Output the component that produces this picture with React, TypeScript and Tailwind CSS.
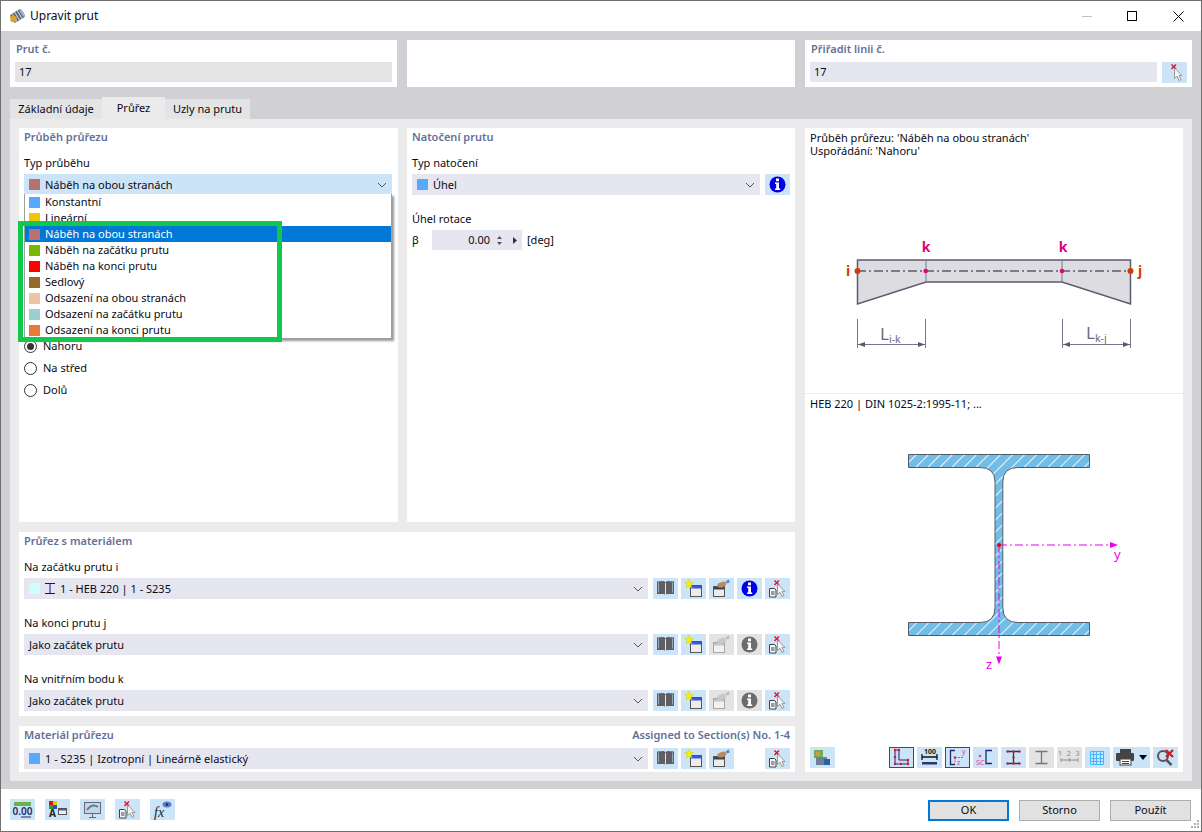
const Swatch = ({ c }: { c: string }) => <span className="w-[11px] h-[11px] shrink-0" style={{ background: c }} />;

const T = ({ children }: { children: React.ReactNode }) => <span className="pt-[2px]">{children}</span>;

const Chevron = () => (
  <svg width="10" height="6" viewBox="0 0 10 6" className="shrink-0">
    <path d="M1 1l4 4 4-4" fill="none" stroke="#555" strokeWidth="1" />
  </svg>
);

function Combo({ children, w, active }: { children: React.ReactNode; w: string; active?: boolean }) {
  return (
    <div className={`${w} ${active ? "bg-[#cce4f7]" : "bg-[#e6e6f1]"} h-[21px] flex items-center gap-[5px] pl-[5px] pr-[5px] shrink-0`}>
      {children}
      <span className="ml-auto"><Chevron /></span>
    </div>
  );
}

function Btn({ children, off, on }: { children: React.ReactNode; off?: boolean; on?: boolean }) {
  return (
    <div className={`w-[25px] h-[21px] shrink-0 flex items-center justify-center ${off ? "bg-[#e3e3e3]" : "bg-[#cce4f7]"} ${on ? "border border-[#0a5a9c]" : ""}`}>
      {children}
    </div>
  );
}

const Ico = ({ children }: { children: React.ReactNode }) => (
  <svg width="25" height="21" viewBox="0 0 25 21" className="shrink-0">{children}</svg>
);

const BookIcon = () => (
  <Ico>
    <path d="M4 3.500l7-.5 1.500 1.500L14 3l7 .5V16h-7l-1.500 1L11 16H4z" fill="#5e5e64" />
    <path d="M5.500 4.500v10M19.500 4.500v10" stroke="#93a6b8" strokeWidth="1" />
    <path d="M12.500 5v12" stroke="#dbe8f2" strokeWidth="1" />
  </Ico>
);

const NewIcon = () => (
  <Ico>
    <rect x="9.500" y="7.500" width="11" height="11" fill="#ececec" stroke="#555" />
    <rect x="10" y="8" width="10" height="2.500" fill="#3c56d8" />
    <path d="M8 1l1.300 3.200 3.200 .3-2.500 2.100 .9 3.400L8 8.200 5.100 10l.9-3.400L3.500 4.500l3.200-.3z" fill="#f5f000" stroke="#c8c800" strokeWidth=".4" />
  </Ico>
);

const EditIcon = ({ off }: { off?: boolean }) => (
  <Ico>
    <rect x="4.500" y="8.500" width="11" height="10" fill={off ? "#f2f2f2" : "#ececec"} stroke={off ? "#a8a8a8" : "#555"} />
    <rect x="5" y="9" width="10" height="2.500" fill={off ? "#c4c4c4" : "#444"} />
    <path d="M8 8l1-2.500 5-2 3.500 .5-.5 3-3.500 2.500H10z" fill={off ? "#c9c9c9" : "#b98a66"} />
    <path d="M17 3l3-1.500 .5 3-2.500 1z" fill={off ? "#bcbcbc" : "#4f87c9"} />
  </Ico>
);

const InfoIcon = ({ off }: { off?: boolean }) => (
  <Ico>
    <circle cx="12.500" cy="10.500" r="8" fill={off ? "#6c6c6c" : "#0000e8"} />
    <rect x="11" y="4.500" width="3" height="2.800" fill="#fff" />
    <path d="M10 8.500h4v6h1.200v1.500H10v-1.500h1.200V10H10z" fill="#fff" />
  </Ico>
);

const PickIcon = ({ doc = true }: { doc?: boolean }) => (
  <Ico>
    {doc && (
      <>
        <path d="M4.500 10.500h5l1.500 1.500v7H4.500z" fill="#f3f3f3" stroke="#444" />
        <path d="M6 14h3.500M6 16h3.500" stroke="#444" />
      </>
    )}
    <path d="M9.500 2.500l4.500 4.500M14 2.500L9.500 7" stroke="#e8102a" strokeWidth="1.500" />
    <path d="M12.500 6l7.500 7.500h-3l2 4-2 1-2-4.300-2.500 2.300z" fill="#f4f4f4" stroke="#9a9a9a" />
  </Ico>
);

const Ibar = ({ stroke, dots }: { stroke: string; dots?: boolean }) => (
  <Ico>
    <path d="M6.500 4.500h12M6.500 16.500h12M12.500 4.500v12" stroke={stroke} strokeWidth="1.300" fill="none" />
    {dots && (
      <g fill="#e0102a">
        <circle cx="6.500" cy="4.500" r="1.200" /><circle cx="18.500" cy="4.500" r="1.200" />
        <circle cx="6.500" cy="16.500" r="1.200" /><circle cx="18.500" cy="16.500" r="1.200" />
        <circle cx="12.500" cy="4.500" r="1.200" /><circle cx="12.500" cy="16.500" r="1.200" /><circle cx="12.500" cy="10.500" r="1.200" />
      </g>
    )}
  </Ico>
);

const ListRows = [
  ["Konstantní", "#58a8ff"],
  ["Lineární", "#f5c400"],
  ["Náběh na obou stranách", "#b87070"],
  ["Náběh na začátku prutu", "#78b800"],
  ["Náběh na konci prutu", "#ff0000"],
  ["Sedlový", "#936a2c"],
  ["Odsazení na obou stranách", "#ecc5a5"],
  ["Odsazení na začátku prutu", "#9dcfcf"],
  ["Odsazení na konci prutu", "#e87a38"],
];

const Title = ({ children }: { children: React.ReactNode }) => (
  <div className="h-[16px] leading-[16px] font-semibold text-[#5f7199]">{children}</div>
);
const Label = ({ children, className }: { children: React.ReactNode; className: string }) => (
  <div className={`h-[16px] leading-[16px] ${className}`}>{children}</div>
);

const Radio = ({ label, on }: { label: string; on?: boolean }) => (
  <div className="h-[16px] flex items-center gap-[6px]">
    <span className="w-[13px] h-[13px] rounded-full border border-[#333] bg-white flex items-center justify-center">
      {on && <span className="w-[7px] h-[7px] rounded-full bg-[#333]" />}
    </span>
    {label}
  </div>
);

function Row({ children, info, edit = true }: { children: React.ReactNode; info?: "on" | "off" | "none"; edit?: boolean }) {
  return (
    <div className="flex gap-[5px]">
      <Combo w="w-[624px]">{children}</Combo>
      <div className="flex gap-[3px]">
        <Btn><BookIcon /></Btn>
        <Btn><NewIcon /></Btn>
        <Btn off={!edit}><EditIcon off={!edit} /></Btn>
        {info === "none" ? <div className="w-[25px]" /> : <Btn off={info === "off"}><InfoIcon off={info === "off"} /></Btn>}
        <Btn><PickIcon /></Btn>
      </div>
    </div>
  );
}

function Beam() {
  return (
    <svg width="378" height="173" viewBox="805 220 378 173" className="block">
      <path d="M857.500 260H1130.500V304L1062 282H926L857.500 304Z" fill="#dcdce1" stroke="#5b5b70" strokeWidth="1.500" />
      <path d="M926 260v22M1062 260v22" stroke="#77778a" strokeWidth="1" />
      <path d="M857 271H1131" stroke="#5b5b70" strokeWidth="1.300" strokeDasharray="9 3 2 3" />
      <circle cx="857.500" cy="271" r="3" fill="#d23c00" />
      <circle cx="1130.500" cy="271" r="3" fill="#d23c00" />
      <circle cx="925.700" cy="271" r="2.300" fill="#e0007a" />
      <circle cx="1062" cy="271" r="2.300" fill="#e0007a" />
      <text x="926" y="252" textAnchor="middle" fontSize="14" fontWeight="700" fill="#e0007a">k</text>
      <text x="1063" y="252" textAnchor="middle" fontSize="14" fontWeight="700" fill="#e0007a">k</text>
      <text x="848" y="276" textAnchor="middle" fontSize="14" fontWeight="700" fill="#d23c00">i</text>
      <text x="1140" y="276" textAnchor="middle" fontSize="14" fontWeight="700" fill="#d23c00">j</text>
      <path d="M857.500 319v29M925.500 319v29M1062.500 319v29M1130.500 319v29" stroke="#77778a" strokeWidth="1" />
      <path d="M858 344.500H925M1063 344.500H1130" stroke="#77778a" strokeWidth="1" />
      <path d="M858 344.500l7-2.500v5zM925 344.500l-7-2.500v5zM1063 344.500l7-2.500v5zM1130 344.500l-7-2.500v5z" fill="#5b5b70" />
      <text x="880" y="340" fontSize="17" fill="#6a6a7a">L</text>
      <text x="889" y="343" fontSize="10.500" fill="#6a6a7a">i-k</text>
      <text x="1086" y="339" fontSize="17" fill="#6a6a7a">L</text>
      <text x="1095" y="342" fontSize="10.500" fill="#6a6a7a">k-j</text>
    </svg>
  );
}

function Section() {
  return (
    <svg width="378" height="260" viewBox="805 440 378 260" className="block">
      <defs>
        <pattern id="hatch" width="8.500" height="8.500" patternUnits="userSpaceOnUse" patternTransform="rotate(45)">
          <rect width="8.500" height="8.500" fill="#70bde8" />
          <rect x="0" width="1" height="8.500" fill="#eef8fd" />
        </pattern>
      </defs>
      <path
        d="M908.500 454.500H1089.500V467.500H1018Q1002.800 467.500 1002.800 482V607.500Q1002.800 622.500 1018 622.500H1089.500V635.500H908.500V622.500H980Q995 622.500 995 607.500V482Q995 467.500 980 467.500H908.500Z"
        fill="url(#hatch)"
        stroke="#555b66"
        strokeWidth="1"
      />
      <path d="M999 545H1112" stroke="#ee00ee" strokeWidth="1" strokeDasharray="8 3 2 3" />
      <path d="M999 545V658" stroke="#ee00ee" strokeWidth="1" strokeDasharray="8 3 2 3" />
      <path d="M1110 542l8 3-8 3zM996 656.500h6l-3 8z" fill="#ee00ee" />
      <circle cx="999" cy="545" r="2" fill="#f00000" />
      <text x="1114" y="559" fontSize="13" fill="#ee00ee">y</text>
      <text x="986" y="669" fontSize="13" fill="#ee00ee">z</text>
    </svg>
  );
}

export default function App() {
  return (
    <div className="w-[1202px] h-[832px] flex flex-col border border-[#707070] overflow-hidden bg-white text-[11px] text-[#0a0a14] font-['Noto_Sans',sans-serif]">
      {/* title bar */}
      <div className="h-[30px] flex items-center shrink-0">
        <svg width="16" height="16" viewBox="0 0 16 16" className="ml-[8px] mr-[5px]">
          <g transform="rotate(-32 8 8)">
            <rect x="2" y="3.500" width="13" height="9.500" rx="2" fill="#5b6b80" />
            <path d="M5 3.500v9.500M8 3.500v9.500M11 3.500v9.500" stroke="#cfd6df" strokeWidth="1" />
            <ellipse cx="14" cy="8.200" rx="1.500" ry="4.500" fill="#9fb0c2" />
          </g>
          <circle cx="4.500" cy="11" r="3.300" fill="#d9a520" />
        </svg>
        <span className="text-[12px]">Upravit prut</span>
        <div className="ml-auto flex items-center">
          <span className="w-[10px] h-px bg-[#c0c0c0] mr-[35px]" />
          <span className="w-[10px] h-[10px] border border-black mr-[36px]" />
          <svg width="11" height="11" viewBox="0 0 11 11" className="mr-[17px]"><path d="M.5 .5l10 10M10.500 .5l-10 10" stroke="#000" /></svg>
        </div>
      </div>

      {/* body */}
      <div className="h-[758px] shrink-0 bg-[#d1d0d5] pl-[9px] pr-[9px] pt-[9px]">
        <div className="flex gap-[10px] h-[47px]">
          <div className="w-[387px] bg-white pl-[5px] pr-[5px] pt-px">
            <div className="pl-px"><Title>Prut č.</Title></div>
            <div className="mt-[5px] h-[20px] bg-[#e4e4e4] pl-[4px] flex items-center">17</div>
          </div>
          <div className="w-[388px] bg-white" />
          <div className="w-[387px] bg-white pl-[5px] pr-[5px] pt-px">
            <div className="pl-px"><Title>Přiřadit linii č.</Title></div>
            <div className="mt-[5px] flex gap-[5px]">
              <div className="w-[347px] h-[20px] bg-[#e6e6f1] pl-[4px] flex items-center">17</div>
              <Btn><PickIcon doc={false} /></Btn>
            </div>
          </div>
        </div>

        {/* tabs */}
        <div className="mt-[10px] h-[22px] flex items-end">
          <div className="w-[92px] h-[20px] bg-[#e4e4e4] flex items-center justify-center">Základní údaje</div>
          <div className="w-[63px] h-[22px] bg-[#ebebeb] flex items-center justify-center">Průřez</div>
          <div className="w-[85px] h-[20px] bg-[#e4e4e4] flex items-center justify-center">Uzly na prutu</div>
        </div>

        <div className="h-[662px] bg-[#ebebeb] p-[9px] flex gap-[10px]">
          <div className="w-[776px] flex flex-col gap-[10px]">
            <div className="flex gap-[9px] h-[394px]">
              {/* Průběh průřezu */}
              <div className="w-[379px] bg-white pl-[5px] pt-px relative">
                <Title>Průběh průřezu</Title>
                <Label className="mt-[10px]">Typ průběhu</Label>
                <div className="mt-[3px]">
                  <Combo w="w-[368px]" active>
                    <Swatch c="#b87070" />
                    <T>Náběh na obou stranách</T>
                  </Combo>
                </div>
                <div className="mt-[143px] flex flex-col gap-[6px]">
                  <Radio label="Nahoru" on />
                  <Radio label="Na střed" />
                  <Radio label="Dolů" />
                </div>

                {/* opened list */}
                <div className="absolute left-[5px] top-[66px] w-[368px] h-[145px] bg-white border-x border-b border-[#a0a0a0] shadow-[2px_2px_2px_rgba(0,0,0,0.4)] z-10">
                  {ListRows.map(([t, c], i) => (
                    <div key={t} className={`h-[16px] flex items-center gap-[5px] pl-[4px] ${i === 2 ? "bg-[#0078d7] text-white" : ""}`}>
                      <Swatch c={c} />
                      <span>{t}</span>
                    </div>
                  ))}
                </div>
                <div className="absolute left-[-1px] top-[93px] w-[264px] h-[121px] border-[5px] border-[#10c84c] z-20" />
              </div>

              {/* Natočení prutu */}
              <div className="w-[388px] bg-white pl-[5px] pt-px">
                <Title>Natočení prutu</Title>
                <Label className="mt-[10px]">Typ natočení</Label>
                <div className="mt-[3px] flex gap-[5px]">
                  <Combo w="w-[348px]">
                    <Swatch c="#58a8ff" />
                    <T>Úhel</T>
                  </Combo>
                  <Btn><InfoIcon /></Btn>
                </div>
                <Label className="mt-[16px]">Úhel rotace</Label>
                <div className="mt-[3px] flex items-center h-[20px]">
                  <span className="w-[20px]">β</span>
                  <div className="w-[90px] h-[20px] bg-[#e6e6f1] flex items-center justify-end pr-[4px] gap-[6px]">
                    <span>0.00</span>
                    <svg width="7" height="11" viewBox="0 0 7 11"><path d="M3.500 1L6 4H1zM3.500 10L1 7h5z" fill="#555" /></svg>
                    <svg width="6" height="9" viewBox="0 0 6 9" className="ml-[3px]"><path d="M1 1l4 3.500L1 8z" fill="#333" /></svg>
                  </div>
                  <span className="ml-[5px]">[deg]</span>
                </div>
              </div>
            </div>

            {/* Průřez s materiálem */}
            <div className="h-[184px] bg-white pl-[5px] pt-px">
              <Title>Průřez s materiálem</Title>
              <Label className="mt-[10px]">Na začátku prutu i</Label>
              <div className="mt-[3px]">
                <Row info="on">
                  <Swatch c="#ccffff" />
                  <svg width="10" height="11" viewBox="0 0 10 11" className="shrink-0"><path d="M0 .5h10M0 10.500h10M5 .5v10" stroke="#10108c" /></svg>
                  <T>1 - HEB 220 | 1 - S235</T>
                </Row>
              </div>
              <Label className="mt-[16px]">Na konci prutu j</Label>
              <div className="mt-[3px]"><Row info="off" edit={false}><T>Jako začátek prutu</T></Row></div>
              <Label className="mt-[16px]">Na vnitřním bodu k</Label>
              <div className="mt-[3px]"><Row info="off" edit={false}><T>Jako začátek prutu</T></Row></div>
            </div>

            {/* Materiál */}
            <div className="h-[46px] bg-white pl-[5px] pt-px">
              <div className="flex justify-between pr-[5px]">
                <Title>Materiál průřezu</Title>
                <Title>Assigned to Section(s) No. 1-4</Title>
              </div>
              <div className="mt-[5px]">
                <Row info="none">
                  <Swatch c="#58a8ff" />
                  <T>1 - S235 | Izotropní | Lineárně elastický</T>
                </Row>
              </div>
            </div>
          </div>

          {/* right panel */}
          <div className="w-[378px] bg-white flex flex-col">
            <div className="h-[266px] shrink-0 border-b border-[#ebebeb]">
              <div className="pl-[5px] pt-[3px] h-[92px] leading-[13px]">
                <div className="h-[13px]">Průběh průřezu: 'Náběh na obou stranách'</div>
                <div className="h-[13px]">Uspořádání: 'Nahoru'</div>
              </div>
              <Beam />
            </div>
            <div className="pl-[5px] pt-[2px] h-[19px] leading-[16px] shrink-0">HEB 220 | DIN 1025-2:1995-11; ...</div>
            <div className="mt-[27px]"><Section /></div>
            <div className="mt-auto pb-[4px] pl-[5px] pr-[5px] flex justify-between">
              <Btn>
                <Ico>
                  <rect x="4" y="3" width="9" height="8" fill="#6fae5a" />
                  <rect x="6" y="5" width="4" height="4" fill="#c9a23c" />
                  <rect x="6" y="10" width="11" height="8" fill="#6f7f96" />
                  <rect x="14" y="12" width="6" height="6" fill="#2f5f9e" />
                </Ico>
              </Btn>
              <div className="flex gap-[3px]">
                <Btn on>
                  <svg width="23" height="19" viewBox="0 0 23 19">
                    <path d="M5 2h4v10h9v4H5z" fill="#d9d3f2" stroke="#1c2a6a" strokeWidth="1" />
                    <g fill="#e0102a"><circle cx="5" cy="2" r="1.200" /><circle cx="9" cy="2" r="1.200" /><circle cx="5" cy="9" r="1.200" /><circle cx="5" cy="16" r="1.200" /><circle cx="11" cy="16" r="1.200" /><circle cx="18" cy="16" r="1.200" /><circle cx="18" cy="12" r="1.200" /></g>
                  </svg>
                </Btn>
                <Btn>
                  <Ico>
                    <text x="13" y="7" textAnchor="middle" fontSize="7" fontWeight="700" fill="#222">100</text>
                    <path d="M5 10h15M5 7v6M20 7v6" stroke="#111" strokeWidth="1.300" />
                    <rect x="5" y="15" width="15" height="2.500" fill="#33336e" />
                  </Ico>
                </Btn>
                <Btn on>
                  <svg width="23" height="19" viewBox="0 0 23 19">
                    <path d="M9 2.500H4.500v14H9" fill="none" stroke="#1c2a6a" strokeWidth="1.300" />
                    <path d="M9 9.500h8M9 9.500v6" stroke="#e040a0" strokeWidth="1" strokeDasharray="2 1" />
                    <circle cx="9" cy="9.500" r="1.300" fill="#e0206a" />
                    <text x="16" y="6" fontSize="7" fill="#e040a0">y</text>
                    <text x="11" y="17" fontSize="7" fill="#e040a0">z</text>
                  </svg>
                </Btn>
                <Btn>
                  <Ico>
                    <path d="M19 3.500h-6v13h6" fill="none" stroke="#1c2a6a" strokeWidth="1.300" />
                    <circle cx="7" cy="9" r="1.300" fill="#e040a0" />
                    <text x="3" y="18" fontSize="7.500" fill="#e040a0">SC</text>
                  </Ico>
                </Btn>
                <Btn><Ibar stroke="#333" dots /></Btn>
                <Btn off><Ibar stroke="#777" /></Btn>
                <Btn off>
                  <Ico>
                    <text x="12.500" y="9" textAnchor="middle" fontSize="7" letterSpacing="1.500" fill="#888">1 2 3</text>
                    <path d="M4 13h17" stroke="#888" />
                    <path d="M4 11v4M12.500 11v4M21 11v4" stroke="#999" />
                  </Ico>
                </Btn>
                <Btn>
                  <Ico>
                    <path d="M5.500 4.500h13v13h-13zM8.500 4.500v13M11.500 4.500v13M15.500 4.500v13M5.500 7.500h13M5.500 11.500h13M5.500 14.500h13" fill="none" stroke="#45b5ff" strokeWidth="1" />
                  </Ico>
                </Btn>
                <div className="w-[37px] h-[21px] bg-[#cce4f7] flex items-center">
                  <svg width="25" height="21" viewBox="0 0 25 21" className="shrink-0">
                    <rect x="7" y="2" width="11" height="5" fill="#444" />
                    <rect x="3" y="6" width="18" height="8" rx="1" fill="#444" />
                    <rect x="7" y="12" width="11" height="6" fill="#fff" stroke="#444" />
                    <path d="M9 14.500h7M9 16.500h7" stroke="#444" />
                  </svg>
                  <svg width="8" height="5" viewBox="0 0 8 5" className="ml-[1px]"><path d="M0 0h8L4 5z" fill="#000" /></svg>
                </div>
                <Btn>
                  <Ico>
                    <circle cx="10" cy="9" r="5" fill="none" stroke="#555" strokeWidth="2" />
                    <path d="M13.500 13l5 5" stroke="#555" strokeWidth="2.500" />
                    <path d="M13 3l7 7M20 3l-7 7" stroke="#e01020" strokeWidth="2.200" />
                  </Ico>
                </Btn>
              </div>
            </div>
          </div>
        </div>
      </div>

      {/* footer */}
      <div className="h-[41px] shrink-0 flex justify-between pl-[9px] pr-[10px] pt-[10px] relative">
        <div className="flex gap-[10px]">
          <Btn>
            <Ico>
              <rect x="4" y="3" width="17" height="4" fill="#6fb04a" />
              <text x="12.500" y="16" textAnchor="middle" fontSize="10" fontWeight="600" fill="#1c2a6a">0.00</text>
              <path d="M11 18h10" stroke="#1c2a6a" />
            </Ico>
          </Btn>
          <Btn>
            <Ico>
              <rect x="4" y="2" width="4" height="4" fill="#e01020" /><rect x="8" y="2" width="4" height="4" fill="#e8c800" />
              <rect x="4" y="6" width="4" height="4" fill="#20a030" /><rect x="8" y="6" width="4" height="4" fill="#2050d0" />
              <text x="4" y="18" fontSize="10" fontWeight="700" fill="#222">A</text>
              <rect x="13.500" y="9.500" width="8" height="6" fill="#eee" stroke="#555" />
              <rect x="14" y="10" width="7" height="1.500" fill="#3c56d8" />
            </Ico>
          </Btn>
          <Btn>
            <Ico>
              <rect x="4.500" y="3.500" width="16" height="11" fill="#c9d6e2" stroke="#667" />
              <path d="M7 11q5-7 11-3" fill="none" stroke="#4a7fb5" strokeWidth="2" />
              <path d="M12.500 15v3M9 18.500h7" stroke="#667" />
            </Ico>
          </Btn>
          <Btn><PickIcon /></Btn>
          <Btn>
            <Ico>
              <text x="4" y="18" fontSize="14" fontStyle="italic" fontFamily="Liberation Serif, serif" fill="#222">fx</text>
              <ellipse cx="17" cy="5.500" rx="4.500" ry="3" fill="#5d7fc0" />
              <circle cx="17" cy="5.500" r="1.300" fill="#1c2a6a" />
            </Ico>
          </Btn>
        </div>
        <div className="flex gap-[10px] items-start mt-px">
          <div className="w-[81px] h-[21px] bg-[#e1e1e1] border-2 border-[#0078d7] flex items-center justify-center">OK</div>
          <div className="w-[81px] h-[21px] bg-[#e1e1e1] border border-[#adadad] flex items-center justify-center">Storno</div>
          <div className="w-[81px] h-[21px] bg-[#e1e1e1] border border-[#adadad] flex items-center justify-center">Použít</div>
        </div>
        <svg width="10" height="10" viewBox="0 0 10 10" className="absolute right-px bottom-px">
          <g fill="#b0b0b0"><rect x="7" y="1" width="2" height="2" /><rect x="4" y="4" width="2" height="2" /><rect x="7" y="4" width="2" height="2" /><rect x="1" y="7" width="2" height="2" /><rect x="4" y="7" width="2" height="2" /><rect x="7" y="7" width="2" height="2" /></g>
        </svg>
      </div>
    </div>
  );
}
